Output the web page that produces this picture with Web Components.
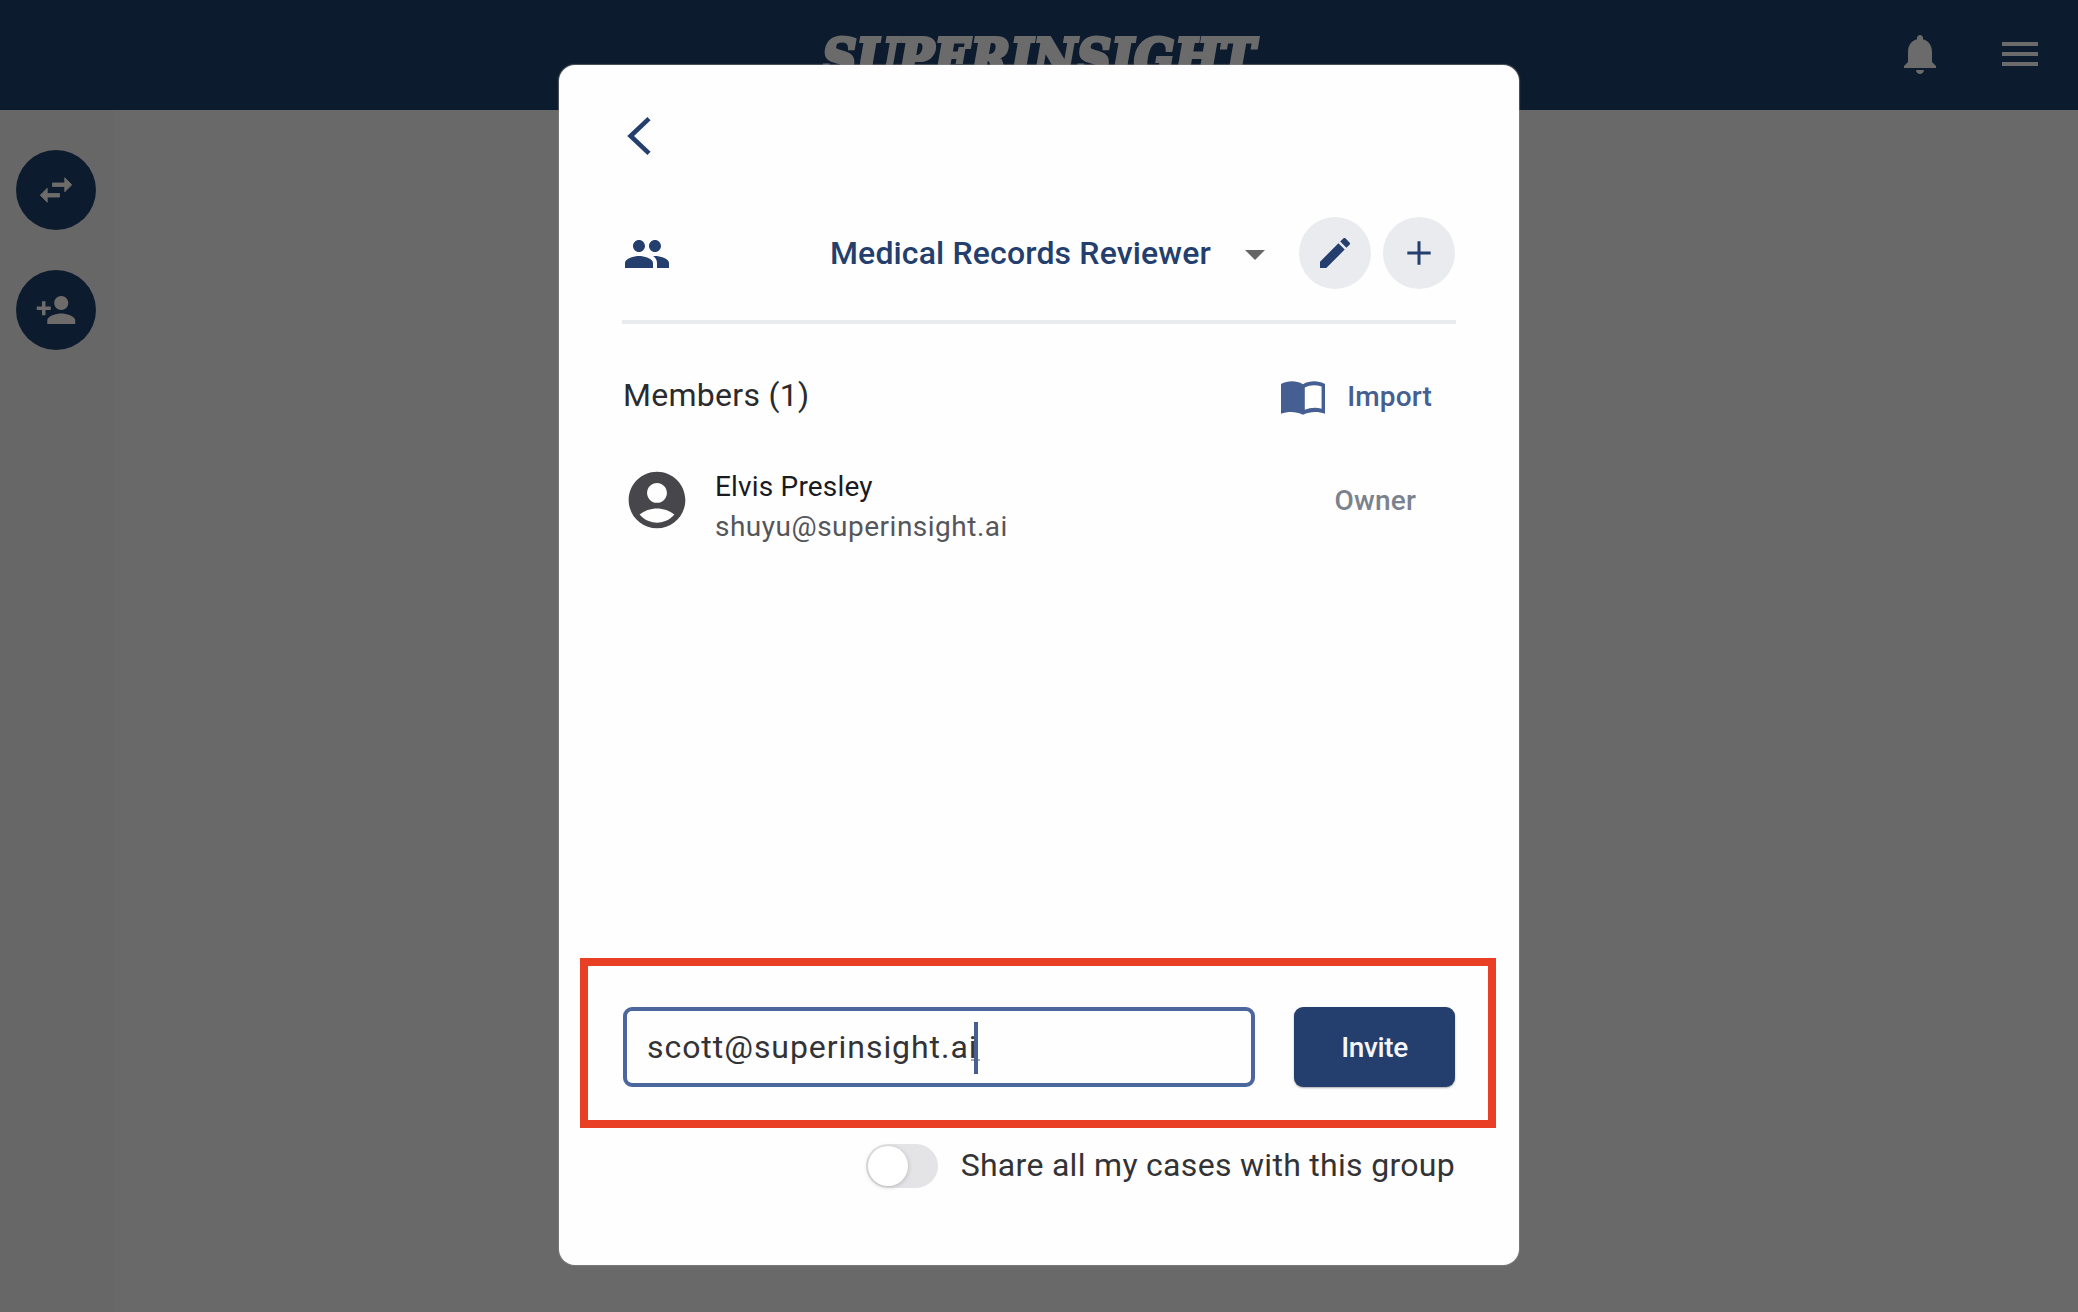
<!DOCTYPE html>
<html lang="en">
<head>
<meta charset="utf-8">
<title>Superinsight</title>
<style>
html,body{margin:0;padding:0}
body{width:2078px;height:1312px;overflow:hidden;background:#696969;font-family:Roboto,"Liberation Sans",sans-serif}
</style>
</head>
<body>
<si-app></si-app>
<script>
const ICONS = {
  bell:'<path d="M12 22c1.1 0 2-.9 2-2h-4c0 1.1.89 2 2 2zm6-6v-5c0-3.07-1.64-5.64-4.5-6.32V4c0-.83-.67-1.5-1.5-1.5s-1.5.67-1.5 1.5v.68C7.63 5.36 6 7.92 6 11v5l-2 2v1h16v-1l-2-2z"/>',
  menu:'<path d="M3 18h18v-2H3v2zm0-5h18v-2H3v2zm0-7v2h18V6H3z"/>',
  swap:'<path d="M6.99 11L3 15l3.99 4v-3H14v-2H6.990v-3zM21 9l-3.990-4v3H10v2h7.010v3L21 9z" stroke="currentColor" stroke-width=".5"/>',
  personAdd:'<path d="M15 12c2.21 0 4-1.79 4-4s-1.79-4-4-4-4 1.79-4 4 1.79 4 4 4zm-9-2V7H4v3H1v2h3v3h2v-3h3v-2H6zm9 4c-2.67 0-8 1.34-8 4v2h16v-2c0-2.66-5.33-4-8-4z"/>',
  group:'<path d="M16 11c1.66 0 2.99-1.34 2.99-3S17.66 5 16 5c-1.66 0-3 1.34-3 3s1.34 3 3 3zm-8 0c1.66 0 2.99-1.34 2.99-3S9.66 5 8 5C6.34 5 5 6.34 5 8s1.34 3 3 3zm0 2c-2.33 0-7 1.17-7 3.5V19h14v-2.5c0-2.33-4.67-3.5-7-3.5zm8 0c-.29 0-.62.02-.97.05 1.16.84 1.97 1.97 1.97 3.45V19h6v-2.5c0-2.33-4.67-3.5-7-3.5z"/>',
  back:'<path d="M13.500 3.300 4.300 12l9.200 8.700" fill="none" stroke="currentColor" stroke-width="2.3"/>',
  caret:'<path d="M7 10l5 5 5-5z"/>',
  edit:'<path d="M3 17.25V21h3.75L17.81 9.94l-3.75-3.75L3 17.25zM20.71 7.04c.39-.39.39-1.02 0-1.41l-2.34-2.34c-.39-.39-1.02-.39-1.41 0l-1.83 1.83 3.75 3.75 1.83-1.83z"/>',
  plus:'<path d="M19 12.900h-6.100v6.100h-1.800v-6.100H5v-1.800h6.100V5h1.800v6.100H19z"/>',
  book:'<path d="M1 5.500C4.500 3.700 8.500 3.700 12 5.600 15.500 3.700 19.500 3.700 23 5.500V20.400C19.500 19.200 15.500 19.200 12 20.900 8.500 19.200 4.500 19.200 1 20.400ZM12.900 7.200V18.400C15.500 17.300 18.500 17 21.300 17.900V6.800C18.500 5.700 15.500 5.900 12.900 7.200Z" fill-rule="evenodd"/>',
  account:'<path d="M12 2C6.480 2 2 6.480 2 12s4.480 10 10 10 10-4.480 10-10S17.520 2 12 2zm0 4c1.930 0 3.500 1.570 3.500 3.500S13.930 13 12 13s-3.500-1.570-3.500-3.500S10.070 6 12 6zm0 14c-2.030 0-4.430-.82-6.140-2.880C7.550 15.800 9.680 15 12 15s4.450.8 6.140 2.120C16.430 19.180 14.030 20 12 20z"/>'
};
const define = (name, html, setup) => customElements.define(name, class extends HTMLElement {
  connectedCallback(){
    if (this.shadowRoot) return;
    this.attachShadow({mode:'open'}).innerHTML = '<style>*{box-sizing:border-box}</style>' + html;
    if (setup) setup(this, this.shadowRoot);
  }
});

define('si-icon', `<style>:host{display:block;flex:none;width:var(--s,48px);height:var(--s,48px)}svg{display:block;width:100%;height:100%;fill:currentColor}</style><svg viewBox="0 0 24 24"></svg>`,
  (el, root) => { root.querySelector('svg').innerHTML = ICONS[el.getAttribute('name')]; });

define('si-round', `<style>:host{display:flex;flex:none;align-items:center;justify-content:center;width:var(--d);height:var(--d);border-radius:50%;background:var(--bg)}</style><slot></slot>`);

define('si-header', `<style>
:host{display:grid;box-sizing:border-box;grid-template-columns:1fr auto 1fr;align-items:center;height:110px;background:#0d1b2e;color:#6b6b6b;padding:0 34px}
.logo{grid-column:2;font:italic bold 52px/60px "DejaVu Serif Condensed","DejaVu Serif",serif;letter-spacing:.8px;padding-top:5px;-webkit-text-stroke:4px #6b6b6b;white-space:nowrap}
nav{display:flex;justify-content:flex-end;gap:52px;padding-bottom:2px}
</style><div class="logo">SUPERINSIGHT</div><nav><si-icon name="bell"></si-icon><si-icon name="menu"></si-icon></nav>`);

define('si-rail', `<style>:host{display:flex;box-sizing:border-box;flex-direction:column;align-items:center;gap:40px;width:114px;height:1202px;padding:40px 2px 0 0;background:#676767;color:#6e6b6b;--d:80px;--bg:#0d1b2e;--s:42px}</style>
<si-round><si-icon name="swap"></si-icon></si-round><si-round><si-icon name="personAdd"></si-icon></si-round>`);

define('si-group-bar', `<style>
:host{display:flex;align-items:center;height:72px;color:#243e6d;padding-right:1px}
.name{margin-left:auto;font-weight:500;font-size:32px;line-height:40px;letter-spacing:.15px;white-space:nowrap}
.caret{color:#666;margin:2px 20px 0 20px}
si-round{--d:72px;--bg:#e9ebef;--s:40px}
si-round+si-round{margin-left:12px}
.g{margin:2px 0 0 1px}
</style><si-icon class="g" name="group"></si-icon><div class="name"><slot></slot></div><si-icon class="caret" name="caret"></si-icon>
<si-round><si-icon name="edit"></si-icon></si-round><si-round><si-icon name="plus"></si-icon></si-round>`);

define('si-member', `<style>
:host{display:flex;align-items:center;height:80px;padding:0 40px 0 1px}
si-icon{--s:68px;color:#46464b}
.t{margin-left:24px;padding-top:13px;display:flex;flex-direction:column;font-size:28px;line-height:40px;letter-spacing:.5px;color:#1b1b1f}
.n{letter-spacing:.18px}
.m{color:#55565a}
.r{margin-left:auto;font-weight:500;font-size:28px;color:#7c828d;letter-spacing:.2px}
</style><si-icon name="account"></si-icon><div class="t"><span class="n"><slot name="name"></slot></span><span class="m"><slot name="mail"></slot></span></div><span class="r"><slot name="role"></slot></span>`);

define('si-members-head', `<style>
:host{display:flex;align-items:center;height:52px;font-size:32px;letter-spacing:.28px;color:#2b2b2e;padding:0 24px 0 1px}
.h{padding-bottom:2px}
.i{margin-left:auto;display:flex;align-items:center;gap:20px;color:#455f92;font-weight:500;font-size:28px;letter-spacing:.15px}
.i si-icon{margin-top:2px}
</style><span class="h"><slot></slot></span><div class="i"><si-icon name="book"></si-icon><span>Import</span></div>`);

define('si-invite', `<style>
:host{display:flex;box-sizing:border-box;justify-content:space-between;width:916px;height:170px;border:8px solid #e83f25;padding:41px 33px 0 35px}
.f{display:flex;align-items:center;width:632px;height:80px;border:4px solid #4c679d;border-radius:9px;padding-left:20px;font-size:32px;letter-spacing:.95px;color:#333336}
.v{position:relative;white-space:nowrap}
.v i{position:absolute;right:0;top:50%;margin-top:-25px;width:4px;height:52px;background:#455f92}
.v b{position:absolute;right:-2px;top:50%;margin-top:12px;width:9px;height:2px;background:#aaa}
.b{width:161px;height:80px;border-radius:9px;background:#243e6d;color:#f4f6fa;font-weight:500;font-size:28px;letter-spacing:-.4px;display:flex;align-items:center;justify-content:center;box-shadow:0 1px 2px #0005}
</style><div class="f"><span class="v"><slot></slot><b></b><i></i></span></div><div class="b"><span>Invite</span></div>`);

define('si-toggle', `<style>
:host{display:flex;align-items:center;justify-content:flex-end;gap:23px;height:44px;font-size:32px;letter-spacing:.3px;color:#333336}
span{padding:0 1px 2px 0}
.k{width:72px;height:44px;border-radius:22px;background:#e4e4e6;padding:2px}
.k div{width:40px;height:40px;border-radius:50%;background:#fff;box-shadow:0 1px 5px #0003}
</style><div class="k"><div></div></div><span><slot></slot></span>`);

define('si-dialog', `<style>
:host{display:block;box-sizing:border-box;position:absolute;left:559px;top:65px;width:960px;height:1200px;background:#fefefe;border-radius:16px;padding:47px 63px 0;box-shadow:0 0 1px 1px #8888}
.back{--s:48px;color:#243e6d}
si-group-bar{margin-top:57px}
hr{border:0;height:4px;background:#e8ebee;margin:31px 0 0}
si-members-head{margin-top:46px}
si-member{margin-top:38px}
si-invite{margin:418px 0 0 -42px}
si-toggle{margin-top:16px}
</style><si-icon class="back" name="back"></si-icon>
<si-group-bar>Medical Records Reviewer</si-group-bar><hr>
<si-members-head>Members (1)</si-members-head>
<si-member><span slot="name">Elvis Presley</span><span slot="mail">shuyu@superinsight.ai</span><span slot="role">Owner</span></si-member>
<si-invite>scott@superinsight.ai</si-invite>
<si-toggle>Share all my cases with this group</si-toggle>`);

define('si-app', `<style>:host{display:block;position:relative;width:2078px;height:1312px;overflow:hidden;background:#696969}</style><si-header></si-header><si-rail></si-rail><si-dialog></si-dialog>`);
</script>
</body>
</html>
